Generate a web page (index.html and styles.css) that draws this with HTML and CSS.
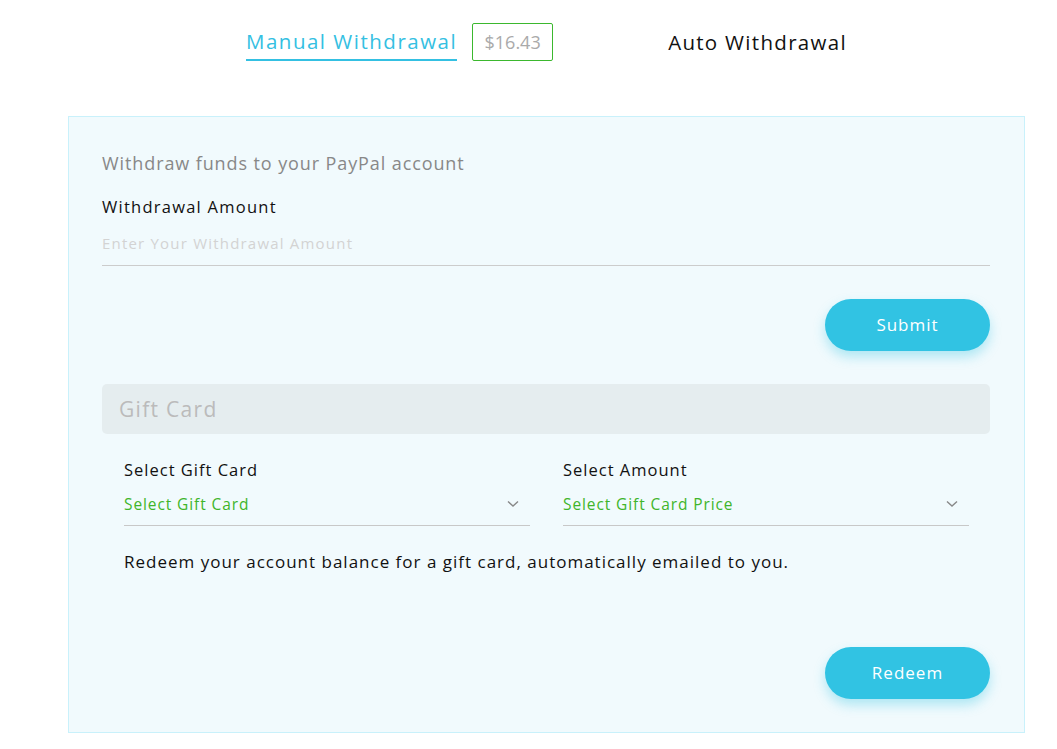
FILE: index.html
```html
<!DOCTYPE html>
<html>
<head>
<meta charset="utf-8">
<link rel="stylesheet" href="styles.css">
</head>
<body>
<div class="tabs">
  <div class="tab tab-active">Manual Withdrawal</div>
  <div class="badge">$16.43</div>
  <div class="tab tab-auto">Auto Withdrawal</div>
</div>
<div class="panel">
  <div class="intro">Withdraw funds to your PayPal account</div>
  <div class="label">Withdrawal Amount</div>
  <div class="input">Enter Your Withdrawal Amount</div>
  <div class="actions"><button class="btn">Submit</button></div>
  <div class="section-head">Gift Card</div>
  <div class="selects">
    <div class="field">
      <div class="field-label">Select Gift Card</div>
      <div class="select"><span>Select Gift Card</span>
        <svg class="chev" width="12" height="8" viewBox="0 0 12 8"><path d="M1 1.5 L6 6 L11 1.5" fill="none" stroke="#888" stroke-width="1.4"/></svg>
      </div>
    </div>
    <div class="field">
      <div class="field-label">Select Amount</div>
      <div class="select"><span>Select Gift Card Price</span>
        <svg class="chev" width="12" height="8" viewBox="0 0 12 8"><path d="M1 1.5 L6 6 L11 1.5" fill="none" stroke="#888" stroke-width="1.4"/></svg>
      </div>
    </div>
  </div>
  <div class="note">Redeem your account balance for a gift card, automatically emailed to you.</div>
  <div class="actions actions-bottom"><button class="btn">Redeem</button></div>
</div>
</body>
</html>
```
FILE: styles.css
```css
html, body { margin: 0; padding: 0; background: #fff; }
body { font-family: "Open Sans", "DejaVu Sans", sans-serif; color: #111; }
.tabs { display: flex; align-items: center; padding-left: 246px; height: 84px; }
.tab { font-size: 20.5px; letter-spacing: 1.5px; line-height: 28px; }
.tab-active { color: #34c0e2; border-bottom: 2px solid #34c0e2; padding-top: 2px; padding-bottom: 4px; margin-top: 2px; }
.badge { margin-left: 15px; border: 1px solid #3bb82e; border-radius: 2px; width: 81px; height: 38px; box-sizing: border-box; display: flex; align-items: center; justify-content: center; color: #aaa; font-size: 18px; }
.tab-auto { margin-left: 115px; letter-spacing: 1.3px; color: #111; }
.panel { margin-left: 68px; margin-top: 32px; width: 957px; height: 617px; box-sizing: border-box; background: #f1fafd; border: 1px solid #c9f1fb; padding: 34px 34px 0 33px; }
.intro { color: #888; font-size: 18px; letter-spacing: 0.9px; line-height: 24px; }
.label { margin-top: 20px; font-size: 16.5px; line-height: 24px; letter-spacing: 1.25px; }
.input { margin-top: 12px; color: #d3d3d3; font-size: 15px; letter-spacing: 1.2px; line-height: 24px; padding-bottom: 10px; border-bottom: 1px solid #cccccc; }
.actions { display: flex; justify-content: flex-end; margin-top: 33px; }
.btn { width: 165px; height: 52px; border: none; border-radius: 26px; background: #31c3e3; color: #fff; font-family: inherit; font-size: 17px; letter-spacing: 1px; padding-bottom: 2px; box-shadow: 0 6px 12px rgba(49,195,227,0.35); }
.section-head { margin-top: 33px; height: 50px; background: #e5edef; border-radius: 5px; color: #bbb; font-size: 21px; letter-spacing: 1.3px; display: flex; align-items: center; padding-left: 17px; }
.selects { display: flex; gap: 33px; padding: 0 21px 0 22px; margin-top: 24px; }
.field { flex: 1; }
.field-label { font-size: 16.5px; line-height: 24px; letter-spacing: 1px; }
.select { margin-top: 10px; display: flex; justify-content: space-between; align-items: center; color: #40b52a; font-size: 15.5px; line-height: 24px; letter-spacing: 0.9px; padding-bottom: 9px; border-bottom: 1px solid #c8c8c8; }
.chev { margin-right: 11px; }
.note { padding-left: 22px; margin-top: 24px; font-size: 17px; line-height: 24px; letter-spacing: 1px; }
.actions-bottom { margin-top: 73px; }
```
